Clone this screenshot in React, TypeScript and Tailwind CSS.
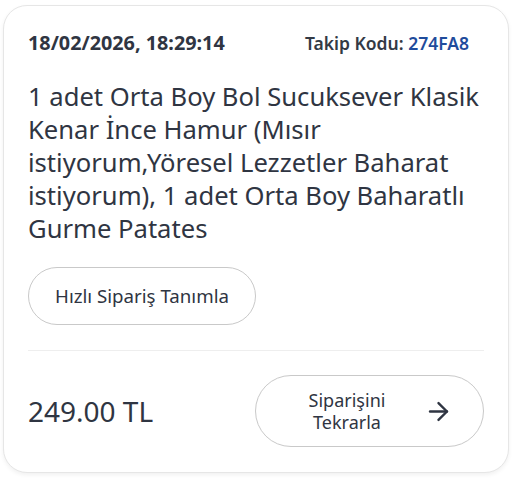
import { ArrowRight } from 'lucide-react'

export default function App() {
  return (
    <div
      className="w-[512px] h-[484px] bg-white px-[3px] pt-[5px]"
      style={{ fontFamily: '"Noto Sans", sans-serif' }}
    >
      <div className="rounded-[24px] border border-[#e6e6e6] bg-white shadow-[0_2px_4px_rgba(0,0,0,0.06)] px-6 pt-[25px] pb-[25px] text-[#2f3542]">
        <div className="flex items-center justify-between h-[24px]">
          <span className="text-[19.8px] font-bold text-[#2f3542]">18/02/2026, 18:29:14</span>
          <span className="text-[17.5px] font-semibold text-[#333a45] pr-[15px]">
            Takip Kodu: <span className="text-[#1f4c9c]">274FA8</span>
          </span>
        </div>
        <p className="mt-[25px] text-[25.6px] leading-[33px] text-[#2f3542]">
          1 adet Orta Boy Bol Sucuksever Klasik Kenar İnce Hamur (Mısır istiyorum,Yöresel Lezzetler Baharat istiyorum), 1 adet Orta Boy Baharatlı Gurme Patates
        </p>
        <button className="mt-[22px] h-[58px] w-[228px] rounded-full border border-[#c9c9c9] text-[18.7px] text-[#2f3542]">
          Hızlı Sipariş Tanımla
        </button>
        <div className="mt-[25px] h-px bg-[#eeeeee]" />
        <div className="mt-[24px] flex items-center justify-between">
          <span className="text-[28px] text-[#2f3542]">249.00 TL</span>
          <button className="h-[72px] w-[229px] rounded-full border border-[#c9c9c9] flex items-center pl-[30px] pr-[30px] justify-between">
            <span className="text-[18px] leading-[22px] text-[#2f3542] text-center w-[122px]">
              Siparişini
              <br />
              Tekrarla
            </span>
            <ArrowRight className="w-[29px] h-[29px] text-[#2f3542]" strokeWidth={2} />
          </button>
        </div>
      </div>
    </div>
  )
}
